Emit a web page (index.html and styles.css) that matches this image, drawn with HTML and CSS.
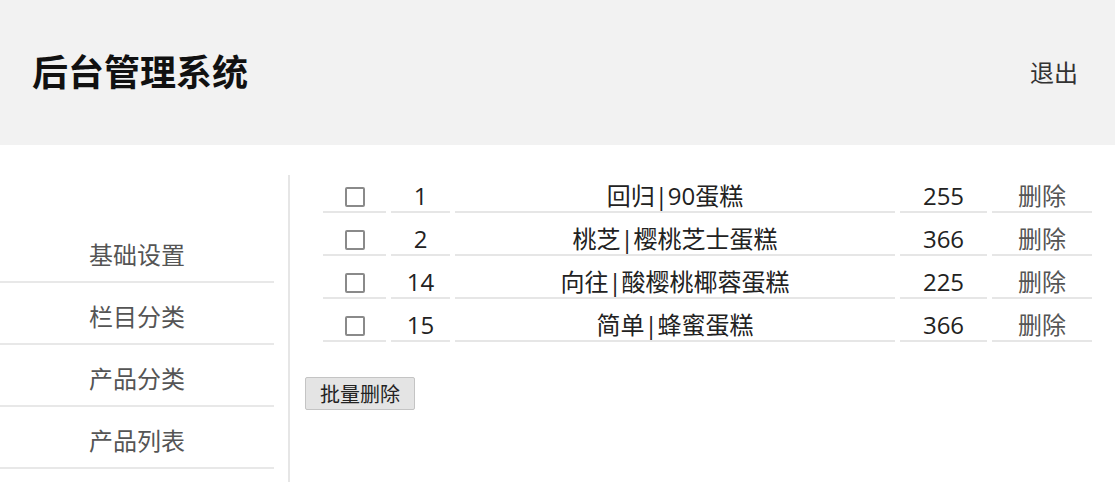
FILE: index.html
```html
<!DOCTYPE html>
<html lang="zh-CN">
<head>
    <meta charset="UTF-8">
    <meta name="viewport" content="width=device-width, initial-scale=1.0">
    <title>后台管理系统</title>
    <link rel="stylesheet" href="styles.css">
</head>
<body>
    <div class="header">
        <h1>后台管理系统</h1>
        <a class="logout" href="#">退出</a>
    </div>
    <div class="content">
        <ul class="sidebar">
            <li>基础设置</li>
            <li>栏目分类</li>
            <li>产品分类</li>
            <li>产品列表</li>
        </ul>
        <div class="main">
            <table class="product-table">
                <tr>
                    <td class="col-check"><input type="checkbox"></td>
                    <td class="col-id">1</td>
                    <td class="col-name">回归|90蛋糕</td>
                    <td class="col-price">255</td>
                    <td class="col-del">删除</td>
                </tr>
                <tr>
                    <td class="col-check"><input type="checkbox"></td>
                    <td class="col-id">2</td>
                    <td class="col-name">桃芝|樱桃芝士蛋糕</td>
                    <td class="col-price">366</td>
                    <td class="col-del">删除</td>
                </tr>
                <tr>
                    <td class="col-check"><input type="checkbox"></td>
                    <td class="col-id">14</td>
                    <td class="col-name">向往|酸樱桃椰蓉蛋糕</td>
                    <td class="col-price">225</td>
                    <td class="col-del">删除</td>
                </tr>
                <tr>
                    <td class="col-check"><input type="checkbox"></td>
                    <td class="col-id">15</td>
                    <td class="col-name">简单|蜂蜜蛋糕</td>
                    <td class="col-price">366</td>
                    <td class="col-del">删除</td>
                </tr>
            </table>
            <button class="batch-delete">批量删除</button>
        </div>
    </div>
</body>
</html>
```

FILE: styles.css
```css
body {
    margin: 0;
    font-family: "Open Sans", "Noto Sans CJK SC", sans-serif;
    color: #333;
    overflow: hidden;
}
.header {
    height: 145px;
    background-color: #f2f2f2;
    display: flex;
    align-items: center;
    justify-content: space-between;
    padding: 0 37px 0 32px;
}
.header h1 {
    margin: 0;
    font-size: 36px;
    font-weight: bold;
    color: #111;
    line-height: 40px;
}
.logout {
    font-size: 24px;
    color: #333;
    text-decoration: none;
    line-height: 30px;
}
.content {
    display: flex;
}
.sidebar {
    width: 274px;
    margin: 76px 0 0;
    padding: 0;
    list-style: none;
}
.sidebar li {
    padding: 16px 0 8px;
    line-height: 36px;
    font-size: 24px;
    color: #555;
    text-align: center;
    border-bottom: 2px solid #e8e8e8;
}
.main {
    flex: 1;
    margin: 30px 0 0 14px;
    padding-left: 15px;
    border-left: 2px solid #e6e6e6;
    min-height: 320px;
}
.product-table {
    margin: -5px 0 0 13px;
    border-collapse: separate;
    border-spacing: 5px 0;
}
.product-table td {
    padding: 10px 0 0;
    line-height: 31px;
    font-size: 24px;
    text-align: center;
    color: #222;
    border-bottom: 2px solid #e6e6e6;
}
.col-check { width: 63px; }
.col-id { width: 59px; }
.col-name { width: 440px; color: #333; }
.col-price { width: 87px; }
.product-table .col-del { width: 100px; color: #555; }
.col-check input {
    appearance: none;
    width: 20px;
    height: 20px;
    margin: 0;
    border: 2px solid #8a8a8a;
    border-radius: 2px;
    background: #fff;
    vertical-align: -2px;
}
.batch-delete {
    display: block;
    margin-top: 35px;
    height: 33px;
    padding: 0 14px;
    font-family: "Noto Sans CJK SC", sans-serif;
    font-size: 20px;
    line-height: 28px;
    color: #222;
    background-color: #e4e4e4;
    border: 1px solid #c4c4c4;
    border-radius: 2px;
}
```
